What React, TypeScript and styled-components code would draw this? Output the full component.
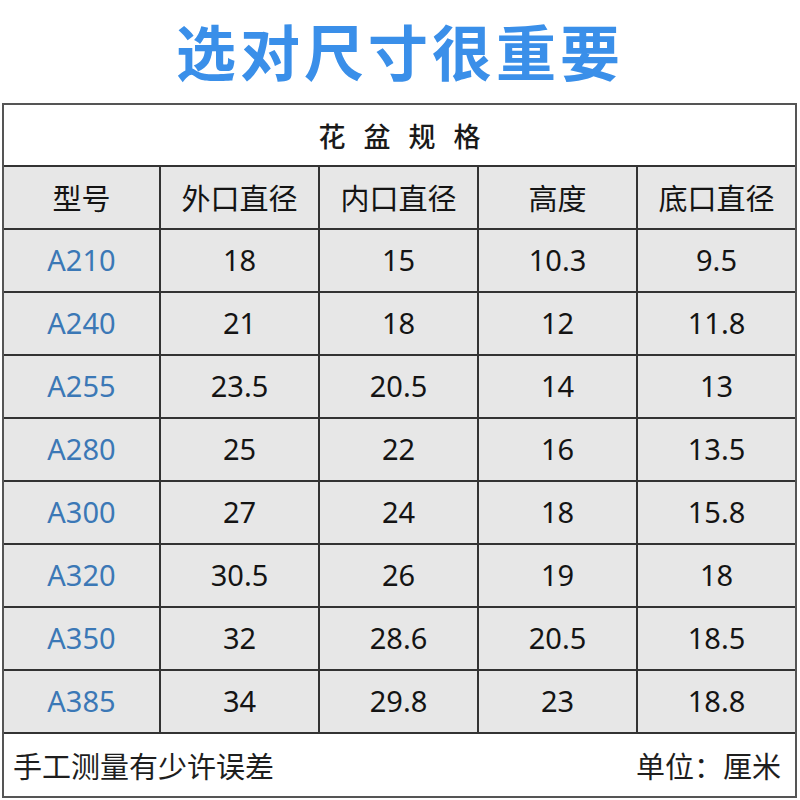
import React from "react";
import styled, { createGlobalStyle } from "styled-components";

const Global = createGlobalStyle`
  html, body { margin: 0; padding: 0; background: #ffffff; }
  body { font-family: "Noto Sans", "Noto Sans CJK SC", sans-serif; }
`;

const Page = styled.div`
  width: 800px;
  height: 800px;
  display: flex;
  flex-direction: column;
  align-items: flex-start;
  background: #fff;
`;

const Headline = styled.h1`
  margin: 0;
  width: 800px;
  height: 103px;
  display: flex;
  align-items: center;
  justify-content: center;
  font-family: "Noto Sans CJK SC", sans-serif;
  font-weight: 700;
  font-size: 60px;
  letter-spacing: 4px;
  color: #3a8fe9;
  padding-bottom: 4px;
  box-sizing: border-box;
`;

const Sheet = styled.div`
  margin-left: 2px;
  width: 795px;
  border: 2px solid #555;
  box-sizing: border-box;
  display: flex;
  flex-direction: column;
`;

const TitleRow = styled.div`
  height: 60px;
  display: flex;
  align-items: center;
  justify-content: center;
  background: #fff;
  border-bottom: 2px solid #333;
  font-family: "Noto Sans CJK SC", sans-serif;
  font-weight: 500;
  font-size: 27px;
  letter-spacing: 6px;
  padding-left: 6px;
  color: #1a1a1a;
`;

const Row = styled.div`
  display: grid;
  grid-template-columns: 157px 159px 159px 159px 1fr;
  height: 63px;
  background: #e7e7e7;
  border-bottom: 2px solid #333;
  box-sizing: border-box;
`;

const Cell = styled.div<{ $blue?: boolean; $cjk?: boolean }>`
  display: flex;
  align-items: center;
  justify-content: center;
  border-right: 2px solid #333;
  font-family: ${(p) => (p.$cjk ? '"Noto Sans CJK SC", sans-serif' : '"Noto Sans", "Noto Sans CJK SC", sans-serif')};
  font-size: 29px;
  color: ${(p) => (p.$blue ? "#3b78b6" : "#141414")};
  padding-bottom: 2px;
  &:last-child { border-right: none; }
`;

const Footer = styled.div`
  height: 62px;
  display: flex;
  align-items: center;
  justify-content: space-between;
  padding: 0 14px 0 9px;
  background: #fff;
  font-family: "Noto Sans CJK SC", sans-serif;
  font-size: 29px;
  color: #1e1e1e;
`;

const headers = ["型号", "外口直径", "内口直径", "高度", "底口直径"];
const data = [
  ["A210", "18", "15", "10.3", "9.5"],
  ["A240", "21", "18", "12", "11.8"],
  ["A255", "23.5", "20.5", "14", "13"],
  ["A280", "25", "22", "16", "13.5"],
  ["A300", "27", "24", "18", "15.8"],
  ["A320", "30.5", "26", "19", "18"],
  ["A350", "32", "28.6", "20.5", "18.5"],
  ["A385", "34", "29.8", "23", "18.8"],
];

export default function App() {
  return (
    <Page>
      <Global />
      <Headline>选对尺寸很重要</Headline>
      <Sheet>
        <TitleRow>花 盆 规 格</TitleRow>
        <Row>
          {headers.map((h) => (
            <Cell key={h} $cjk>
              {h}
            </Cell>
          ))}
        </Row>
        {data.map((r) => (
          <Row key={r[0]}>
            {r.map((v, i) => (
              <Cell key={i} $blue={i === 0}>
                {v}
              </Cell>
            ))}
          </Row>
        ))}
        <Footer>
          <span>手工测量有少许误差</span>
          <span>单位：厘米</span>
        </Footer>
      </Sheet>
    </Page>
  );
}
